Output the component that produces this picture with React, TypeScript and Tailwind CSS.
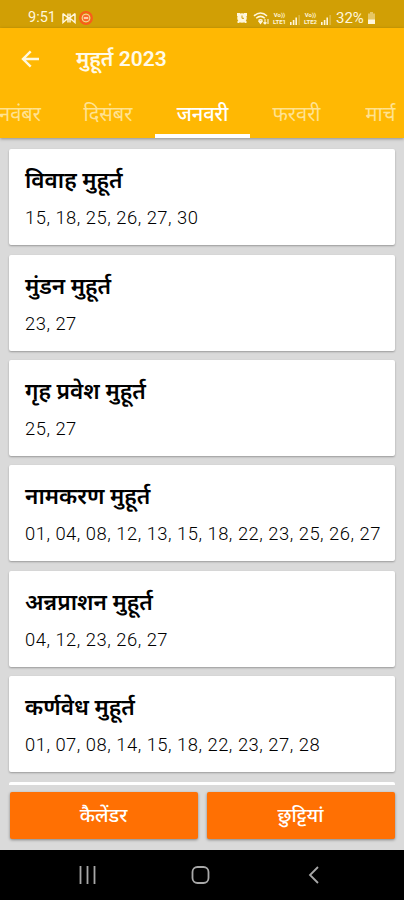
import React from 'react';

const months = [
  { label: 'नवंबर', width: 'w-[82px]' },
  { label: 'दिसंबर', width: 'w-[94px]' },
  { label: 'जनवरी', width: 'w-[95px]', active: true },
  { label: 'फरवरी', width: 'w-[93px]' },
  { label: 'मार्च', width: 'w-[75px]' },
];

const muhurats = [
  { title: 'विवाह मुहूर्त', dates: '15, 18, 25, 26, 27, 30' },
  { title: 'मुंडन मुहूर्त', dates: '23, 27' },
  { title: 'गृह प्रवेश मुहूर्त', dates: '25, 27' },
  { title: 'नामकरण मुहूर्त', dates: '01, 04, 08, 12, 13, 15, 18, 22, 23, 25, 26, 27' },
  { title: 'अन्नप्राशन मुहूर्त', dates: '04, 12, 23, 26, 27' },
  { title: 'कर्णवेध मुहूर्त', dates: '01, 07, 08, 14, 15, 18, 22, 23, 27, 28' },
];

function Signal({ sim }: { sim: string }) {
  return (
    <div className="flex items-end gap-[2px]">
      <div className="flex w-[15px] flex-col items-center text-[6px] leading-[7px] font-bold">
        <span>Vo))</span>
        <span>{sim}</span>
      </div>
      <svg width="11" height="12" viewBox="0 0 11 12" fill="currentColor">
        <path d="M1 9h1.6v3H1zM3.8 7h1.6v5H3.8zM6.4 4.5H8V12H6.4z" />
        <path d="M9.6 2h1v10h-1z" opacity="0.45" />
      </svg>
    </div>
  );
}

function StatusBar() {
  return (
    <div className="flex h-7 shrink-0 items-center bg-[#d19f05] pt-2 pr-[28px] pl-[28px] text-[#fff6dc]">
      <span className="w-[30px] text-[14.5px] leading-none whitespace-nowrap">9:51</span>
      <svg className="ml-[4px]" width="14" height="12" viewBox="0 0 14 12" fill="none" stroke="currentColor" strokeWidth="1.5">
        <path d="M1 1.5v9l5-4.2v4.2M13 1.5v9L8 6.3v4.2M1 1.5l6 5 6-5M6 1.5v3M8 1.5v3" />
      </svg>
      <svg className="ml-[3px]" width="14" height="14" viewBox="0 0 14 14" fill="none">
        <circle cx="7" cy="7" r="5.9" stroke="#fa5b1c" strokeWidth="2" />
        <circle cx="7" cy="7" r="3.9" fill="#fa6a2b" stroke="#ffd3a0" strokeWidth="1" />
        <path d="M4.8 7h4.4" stroke="#fff6dc" strokeWidth="1.4" />
      </svg>
      <div className="ml-auto flex items-center">
        <svg width="12" height="12" viewBox="0 0 12 12">
          <circle cx="6" cy="6" r="4.8" fill="currentColor" />
          <path d="M1 1h3v3H1zM8 1h3v3H8zM1.500 9h2v2h-2zM8.500 9h2v2h-2z" fill="currentColor" />
          <path d="M6 3.500v2.800h2" fill="none" stroke="#d19f05" strokeWidth="1" />
        </svg>
        <svg className="ml-[5px]" width="17" height="13" viewBox="0 0 17 13" fill="none" stroke="currentColor" strokeWidth="1.5">
          <path d="M1 4c4-4 9-4 13 0M3.200 6.300c3-2.600 5.700-2.600 8.600 0M5.500 8.600c1.400-1.200 2.700-1.200 4 0" />
          <path d="M6 9.500h3l-1.500 2zM12 7v5M10.500 10.500L12 12l1.500-1.500M15 12V7" fill="currentColor" strokeWidth="1.1" />
        </svg>
        <div className="ml-[2px] flex gap-[3px]">
          <Signal sim="LTE1" />
          <Signal sim="LTE2" />
        </div>
        <span className="ml-[5px] w-[31px] text-[15px] leading-none whitespace-nowrap">32%</span>
        <svg width="9" height="12" viewBox="0 0 9 12" fill="currentColor">
          <path d="M3 0h3v1.500h2V8H1V1.500h2z" opacity="0.45" />
          <path d="M1 7.500h7V12H1z" />
        </svg>
      </div>
    </div>
  );
}

function Header() {
  return (
    <header className="relative z-10 shrink-0 bg-[#ffb803] text-white shadow-[0_1px_3px_rgba(0,0,0,0.35)]">
      <div className="flex h-[62px] items-center pl-[21px]">
        <svg width="19" height="18" viewBox="0 0 19 18" fill="none" stroke="#fff8e0" strokeWidth="2.4">
          <path d="M18 9H2.500M9.700 1.300L2 9l7.700 7.700" />
        </svg>
        <h1 className="ml-[36px] text-[21px] leading-none font-semibold text-[#fffae8]">मुहूर्त 2023</h1>
      </div>
      <div className="overflow-hidden">
        <div className="-ml-[21px] flex h-12 w-[439px]">
          {months.map((month) => (
            <div
              key={month.label}
              className={`${month.width} flex h-12 shrink-0 items-center justify-center border-b-4 pt-1 text-[20px] leading-none ${
                month.active ? 'border-white font-medium text-white' : 'border-transparent text-[#ffe291]'
              }`}
            >
              {month.label}
            </div>
          ))}
        </div>
      </div>
    </header>
  );
}

export default function App() {
  return (
    <div className="flex h-[900px] w-[404px] flex-col overflow-hidden bg-[#dadada] font-[Roboto,'Noto_Sans_Devanagari','Noto_Sans',sans-serif]">
      <StatusBar />
      <Header />
      <main className="flex h-[647px] shrink-0 flex-col gap-[9.4px] overflow-hidden px-[9px] pt-[11.3px]">
        {muhurats.map((item) => (
          <section
            key={item.title}
            className="h-24 shrink-0 rounded-[2px] bg-white pl-4 shadow-[0_1px_2px_rgba(0,0,0,0.3)]"
          >
            <h2 className="pt-[17px] text-[22.6px] leading-[30px] font-semibold whitespace-nowrap text-black">{item.title}</h2>
            <p className="mt-[11px] text-[18.4px] leading-[22px] font-light tracking-[0.5px] whitespace-nowrap text-black">{item.dates}</p>
          </section>
        ))}
        <section className="h-24 shrink-0 rounded-[2px] bg-white" />
      </main>
      <div className="flex h-[65px] shrink-0 gap-[9px] px-[9.5px] pt-[7px]">
        <button className="h-[47px] flex-1 rounded-[2px] bg-[#ff7003] text-[19.5px] leading-none font-medium text-white shadow-[0_1px_3px_rgba(0,0,0,0.4)]">
          कैलेंडर
        </button>
        <button className="h-[47px] flex-1 rounded-[2px] bg-[#ff7003] text-[19.5px] leading-none font-medium text-white shadow-[0_1px_3px_rgba(0,0,0,0.4)]">
          छुट्टियां
        </button>
      </div>
      <nav className="flex h-[50px] shrink-0 items-center bg-black pl-[78px] text-[#a8a8a8]">
        <svg width="19" height="18" viewBox="0 0 19 18" fill="none" stroke="currentColor" strokeWidth="1.8">
          <path d="M2.500 0v18M9.500 0v18M16.500 0v18" />
        </svg>
        <svg className="ml-[94px]" width="19" height="18" viewBox="0 0 19 18" fill="none" stroke="currentColor" strokeWidth="1.8">
          <rect x="1.5" y="1" width="16" height="16" rx="5" />
        </svg>
        <svg className="ml-[98px]" width="12" height="18" viewBox="0 0 12 18" fill="none" stroke="currentColor" strokeWidth="1.8">
          <path d="M10 1L2 9l8 8" />
        </svg>
      </nav>
    </div>
  );
}
